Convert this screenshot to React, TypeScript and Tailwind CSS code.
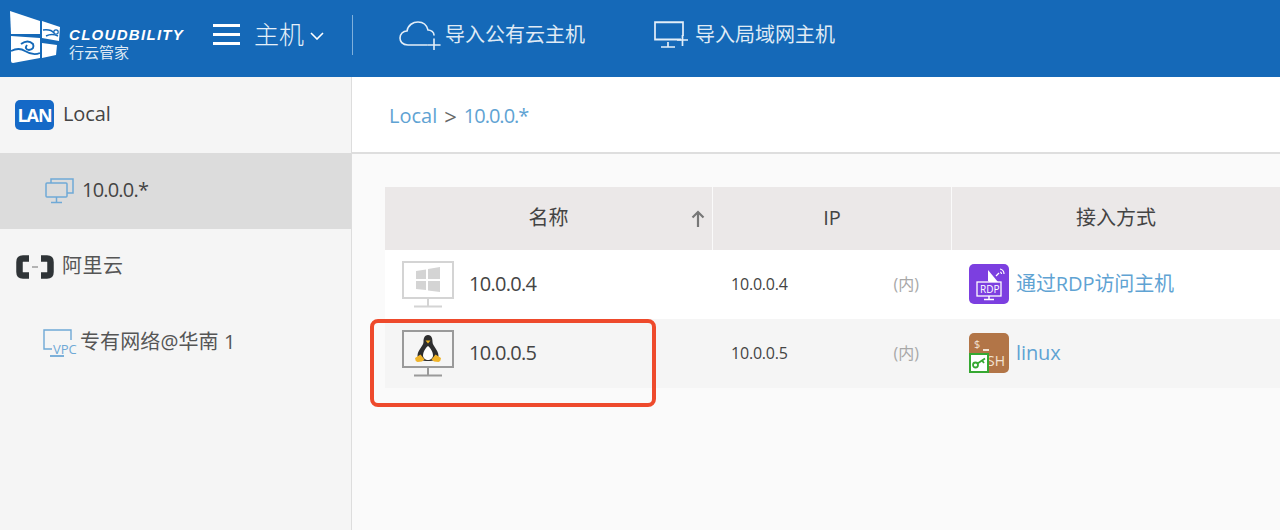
import React from "react";

const Logo = () => (
  <svg width="52" height="56" viewBox="0 0 52 56" className="shrink-0 mt-[2px]">
    <path d="M0 3 L30 13 V26 L1 26Z" fill="#fff" />
    <path d="M32 13 L50 19 L49 33 L32 30Z" fill="#fff" />
    <path d="M1 28 L30 30 V50 L3 55 Q1 55 1 53Z" fill="#fff" />
    <path d="M32 35 L47 37 L46 47 L32 50Z" fill="#fff" />
    <path d="M1 43 Q9 39 15 43 Q23 48 30 45" stroke="#1569b8" strokeWidth="1.800" fill="none" />
    <path d="M11 36 Q18 31 23 36 Q25 41 19 42 Q14 41 17 37" stroke="#1569b8" strokeWidth="2" fill="none" />
    <path d="M33 22 Q41 21 44 25 M36 28 Q42 25 48 28" stroke="#1569b8" strokeWidth="1.400" fill="none" />
    <circle cx="46" cy="24" r="2.200" stroke="#1569b8" strokeWidth="1.200" fill="none" />
  </svg>
);

const Burger = () => (
  <div className="flex flex-col justify-between w-[27px] h-[21px] shrink-0">
    <div className="h-[3px] bg-white" />
    <div className="h-[3px] bg-white" />
    <div className="h-[3px] bg-white" />
  </div>
);

const CloudPlus = () => (
  <svg width="42" height="30" viewBox="0 0 42 30" fill="none" stroke="#e3eef8" strokeWidth="1.600" strokeLinecap="round">
    <path d="M28 25 H9 C3 25 1 21 1 18 C1 14 4 11 8 11 C9 5 14 2 19 2 C25 2 28 6 29 10 C32 10 35 12 35 15" />
    <path d="M29 25 H41 M35 19 V30" />
  </svg>
);

const MonitorPlus = () => (
  <svg width="36" height="28" viewBox="0 0 36 28" fill="none" stroke="#e3eef8" strokeWidth="1.700">
    <path d="M28 17 H2 V2 H30 V14" transform="translate(0 -1) scale(1 1.15)" />
    <path d="M15 21 V26 M8 26 H22" />
    <path d="M24 19 H35 M29.500 14 V25" />
  </svg>
);

const LanBadge = () => (
  <div className="w-[39px] h-[30px] rounded-[5px] bg-[#1569c7] flex items-center justify-center text-white text-[18px] font-bold tracking-[-1px] font-['Open_Sans',sans-serif] shrink-0">
    LAN
  </div>
);

const Monitors = () => (
  <svg width="29" height="26" viewBox="0 0 29 26" fill="none" stroke="#6fa9d6" strokeWidth="1.500" className="shrink-0">
    <path d="M6 5 V1 H28 V15 H22" />
    <rect x="1" y="5" width="21" height="14" rx="1" fill="#dcdcdc" />
    <path d="M11.500 19 V24 M6 24.500 H17" />
  </svg>
);

const AliCloud = () => (
  <svg width="38" height="24" viewBox="0 0 38 24" fill="none" className="shrink-0">
    <path d="M13 3.500 H7 Q3.500 3.500 3.500 7 V17 Q3.500 20.500 7 20.500 H13" stroke="#2f3437" strokeWidth="6.500" strokeLinejoin="round" />
    <path d="M25 3.500 H31 Q34.500 3.500 34.500 7 V17 Q34.500 20.500 31 20.500 H25" stroke="#2f3437" strokeWidth="6.500" strokeLinejoin="round" />
    <path d="M16 12 H22" stroke="#888" strokeWidth="1.200" />
  </svg>
);

const VpcIcon = () => (
  <div className="relative w-[33px] h-[29px] shrink-0">
    <svg width="33" height="29" viewBox="0 0 33 29" fill="none" stroke="#6fa9d6" strokeWidth="1.400" className="absolute inset-0">
      <path d="M9 20 H1 V1 H28 V11" />
      <path d="M7 27 H21" strokeWidth="1.800" />
    </svg>
    <span className="absolute left-[10px] top-[12px] text-[13px] leading-[16px] text-[#6fa9d6] font-['Open_Sans',sans-serif]">VPC</span>
  </div>
);

const WinMonitor = () => (
  <svg width="52" height="47" viewBox="0 0 52 47" fill="none" className="shrink-0">
    <rect x="1" y="1" width="50" height="36" fill="#fff" stroke="#d4d4d4" strokeWidth="2" />
    <path d="M14 10 L24 8.500 V18 H14Z M26 8 L38 6 V18 H26Z M14 20 H24 V29 L14 28Z M26 20 H38 V31 L26 29.500Z" fill="#d4d4d4" />
    <path d="M26 37 V45 M12 45.500 H40" stroke="#d4d4d4" strokeWidth="2" />
  </svg>
);

const LinuxMonitor = () => (
  <svg width="52" height="47" viewBox="0 0 52 47" fill="none" className="shrink-0">
    <rect x="1" y="1" width="50" height="36" fill="#f5f5f5" stroke="#9a9a9a" strokeWidth="2" />
    <path d="M26 5 C22 5 21.500 9 21.500 12 C21.500 16 15.500 20 15.500 26 C15.500 29 20 31 26 31 C32 31 36.500 29 36.500 26 C36.500 20 30.500 16 30.500 12 C30.500 9 30 5 26 5Z" fill="#2e2e2e" />
    <path d="M26 16 C23.500 18 21 22 21 25.500 C21 28 23.500 30 26 30 C28.500 30 31 28 31 25.500 C31 22 28.500 18 26 16Z" fill="#fff" />
    <path d="M23.500 10.500 H28.500 L26 13.500Z" fill="#eeb422" />
    <path d="M13 28 L18.500 24.500 L22.500 29.500 L20 31.500 L15.500 32 Q13 31 13 28Z M39 28 L33.500 24.500 L29.500 29.500 L32 31.500 L36.500 32 Q39 31 39 28Z" fill="#f0b429" />
    <path d="M26 37 V45 M12 45.500 H40" stroke="#9a9a9a" strokeWidth="2" />
  </svg>
);

const RdpIcon = () => (
  <div className="relative w-[40px] h-[40px] rounded-[5px] bg-[#7c3fe0] shrink-0">
    <svg width="40" height="40" viewBox="0 0 40 40" fill="none" className="absolute inset-0">
      <path d="M19 6 L29 18 Q24 22 19 17Z" fill="#fff" />
      <path d="M27 12 L30 9" stroke="#fff" strokeWidth="1.200" />
      <path d="M31 5 Q35 6 35 10 M31 8 Q32.500 8 32.500 10" stroke="#fff" strokeWidth="1.200" />
      <rect x="8" y="18" width="24" height="14" fill="#7c3fe0" stroke="#fff" strokeWidth="1.300" />
      <path d="M20 32 V35 M15 35.500 H25" stroke="#fff" strokeWidth="1.500" />
    </svg>
    <span className="absolute left-[11px] top-[19.500px] text-[10px] leading-[12px] text-white font-['Open_Sans',sans-serif]">RDP</span>
  </div>
);

const SshIcon = () => (
  <div className="relative w-[40px] h-[40px] rounded-[5px] bg-[#b27547] shrink-0 text-[#f3e3d3] font-['Open_Sans',sans-serif]">
    <span className="absolute left-[5px] top-[4px] text-[11px] leading-[14px]">$</span>
    <div className="absolute left-[14px] top-[16px] w-[6px] h-[2px] bg-[#f3e3d3]" />
    <span className="absolute right-[4px] bottom-[4px] text-[14px] leading-[16px]">SH</span>
    <div className="absolute left-0 bottom-0 w-[20px] h-[20px] bg-white border-2 border-[#36a832] flex items-center justify-center">
      <svg width="15" height="13" viewBox="0 0 15 13" fill="none" stroke="#36a832" strokeWidth="1.800">
        <circle cx="3.500" cy="9" r="2.500" />
        <path d="M5.500 7.500 L13 2.500 M10 4.500 L12 7" />
      </svg>
    </div>
  </div>
);

const HeaderCell = ({ className, children }: { className: string; children: React.ReactNode }) => (
  <div className={`flex items-center justify-center h-full bg-[#ebe8e8] text-[20px] text-[#444] ${className}`}>{children}</div>
);

const Row = ({ bg, icon, ip, access, label }: { bg: string; icon: React.ReactNode; ip: string; access: React.ReactNode; label: string }) => (
  <div className={`flex h-[69px] items-center ${bg}`}>
    <div className="w-[328px] flex items-center gap-[15px] pl-[17px] text-[20px] text-[#444]">
      {icon}
      <span className="tracking-[-0.7px] mb-[2px]">{ip}</span>
    </div>
    <div className="w-[239px] flex items-center pl-[18px] pr-[33px] justify-between">
      <span className="text-[16px] text-[#444] tracking-[-0.2px] mb-[2px]">{ip}</span>
      <span className="text-[16px] text-[#a8a8a8] mb-[2px]">(内)</span>
    </div>
    <div className="flex-1 flex items-center gap-[7px] pl-[17px]">
      <div className="mb-[2px]">{access}</div>
      <span className="text-[20px] text-[#5fa3d3] tracking-[-0.1px] mb-[2px]">{label}</span>
    </div>
  </div>
);

export default function App() {
  return (
    <div className="relative w-[1280px] h-[530px] overflow-hidden bg-[#fafafa] font-['Open_Sans','Noto_Sans_CJK_SC',sans-serif]">
      <header className="h-[77px] bg-[#1569b8] flex items-center pb-[8px] text-white">
        <div className="flex items-center pl-[10px] w-[353px] h-full">
          <Logo />
          <div className="ml-[7px] mt-[17px] flex flex-col w-[124px]">
            <span className="text-[15px] leading-[17px] font-black italic tracking-[1.300px] font-['Liberation_Sans',sans-serif]">CLOUDBILITY</span>
            <span className="text-[15px] leading-[18px] text-[#dfeaf5]">行云管家</span>
          </div>
          <div className="ml-[20px] flex items-center">
            <Burger />
            <span className="ml-[14px] mb-[2px] text-[25px] leading-[32px] text-[#e6f0f9] font-light">主机</span>
            <svg width="14" height="8" viewBox="0 0 14 8" fill="none" stroke="#fff" strokeWidth="1.600" className="ml-[6px] mt-[3px]">
              <path d="M1 1 L7 7 L13 1" />
            </svg>
          </div>
        </div>
        <div className="w-px h-[40px] bg-[#7fb0dc] -ml-px" />
        <div className="flex items-center ml-[46px]">
          <CloudPlus />
          <span className="ml-[4px] text-[20px] text-[#dfeaf5]">导入公有云主机</span>
        </div>
        <div className="flex items-center ml-[68px]">
          <MonitorPlus />
          <span className="ml-[6px] text-[20px] text-[#dfeaf5]">导入局域网主机</span>
        </div>
      </header>

      <div className="flex h-[453px]">
        <aside className="w-[352px] bg-[#f5f5f5] border-r border-[#dddddd] shrink-0 text-[20px] text-[#444]">
          <div className="h-[76px] flex items-center gap-[9px] pl-[15px]">
            <LanBadge />
            <span className="mb-[2px] tracking-[-0.1px]">Local</span>
          </div>
          <div className="h-[76px] flex items-center gap-[8px] pl-[45px] bg-[#dcdcdc]">
            <Monitors />
            <span className="tracking-[-0.8px] mb-[2px]">10.0.0.*</span>
          </div>
          <div className="h-[76px] flex items-center gap-[8px] pl-[16px]">
            <AliCloud />
            <span className="text-[#555] mb-[2px] tracking-[0.5px]">阿里云</span>
          </div>
          <div className="h-[76px] flex items-center gap-[4px] pl-[43px]">
            <VpcIcon />
            <span className="text-[#555] tracking-[0.1px] mb-[2px]">专有网络@华南 1</span>
          </div>
        </aside>

        <main className="flex-1 min-w-0">
          <div className="h-[77px] bg-white border-b-2 border-[#dedede] flex items-center pl-[37px] pt-[2px] text-[20px] text-[#5fa3d3]">
            <span>Local</span>
            <span className="mx-[7px] text-[#666] text-[22px] leading-[28px]">&gt;</span>
            <span className="tracking-[-1px]">10.0.0.*</span>
          </div>
          <div className="pl-[33px] pt-[33px]">
            <div className="flex h-[63px] gap-px">
              <HeaderCell className="relative w-[327px]">
                <span className="mb-[2px]">名称</span>
                <svg width="14" height="18" viewBox="0 0 14 18" fill="none" stroke="#777" strokeWidth="2.200" className="absolute right-[7px] top-[23px]">
                  <path d="M7 17 V2 M1.500 7.500 L7 2 L12.500 7.500" />
                </svg>
              </HeaderCell>
              <HeaderCell className="w-[238px]"><span className="mb-[2px]">IP</span></HeaderCell>
              <HeaderCell className="flex-1"><span className="mb-[2px]">接入方式</span></HeaderCell>
            </div>
            <Row bg="bg-white" icon={<WinMonitor />} ip="10.0.0.4" access={<RdpIcon />} label="通过RDP访问主机" />
            <Row bg="bg-[#f5f5f5]" icon={<LinuxMonitor />} ip="10.0.0.5" access={<SshIcon />} label="linux" />
          </div>
        </main>
      </div>

      <div className="absolute left-[370px] top-[319px] w-[286px] h-[88px] rounded-[8px] border-[4px] border-[#ee4a2c]" />
    </div>
  );
}
